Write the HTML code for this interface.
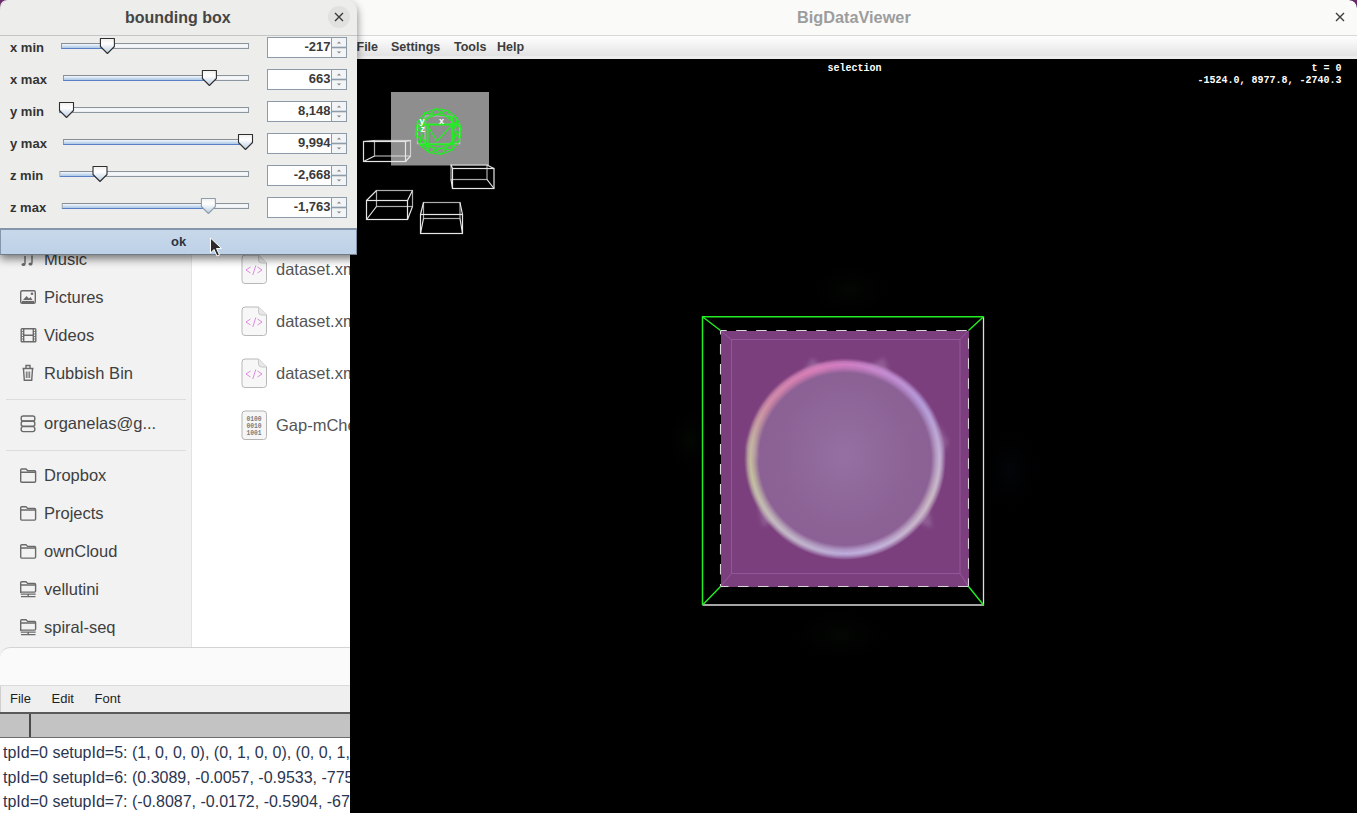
<!DOCTYPE html>
<html><head><meta charset="utf-8">
<style>
*{margin:0;padding:0;box-sizing:border-box}
html,body{width:1357px;height:813px;overflow:hidden;background:#000;font-family:"Liberation Sans",sans-serif}
.a{position:absolute}
.t{position:absolute;line-height:1;white-space:pre}
#fm{left:0;top:0;width:350px;height:665px;background:#fff;overflow:hidden}
#side{left:0;top:0;width:192px;height:665px;background:#f2f2f2;border-right:1px solid #e3e3e3}
.si{left:44px;font-size:16.5px;color:#3f3f3f}
.sep{position:absolute;left:6px;width:180px;height:1px;background:#dcdcdc}
.fi{left:276px;font-size:16.5px;color:#555}
#log{left:0;top:647px;width:350px;height:166px;background:#fafafa;border-top-left-radius:10px;border-top:1px solid #d4d4d4;overflow:hidden}
#bdv{left:350px;top:0;width:1007px;height:813px;background:#000;overflow:hidden}
.mm{top:41px;font-size:12.5px;font-weight:bold;color:#3c3c3c}
.ov{font-family:"Liberation Mono",monospace;font-weight:bold;font-size:10px;color:#fff}
#dlg{left:0;top:0;width:357px;height:255px;background:#ededeb;border-top-left-radius:10px;border-top-right-radius:10px;box-shadow:0 4px 9px rgba(0,0,0,.5)}
.lbl{left:10px;font-size:13px;font-weight:bold;color:#333}
.fv{font-size:13px;font-weight:bold;color:#3a3a3a}
</style></head><body>
<div id="fm" class="a">
<div id="side" class="a"></div>
<div class="t si" style="top:250.8px">Music</div>
<div class="t si" style="top:288.8px">Pictures</div>
<div class="t si" style="top:326.8px">Videos</div>
<div class="t si" style="top:364.8px">Rubbish Bin</div>
<div class="t si" style="top:415.3px">organelas@g...</div>
<div class="t si" style="top:467.3px">Dropbox</div>
<div class="t si" style="top:505.3px">Projects</div>
<div class="t si" style="top:543.3px">ownCloud</div>
<div class="t si" style="top:581.3px">vellutini</div>
<div class="t si" style="top:619.3px">spiral-seq</div>
<div class="sep" style="top:399px"></div><div class="sep" style="top:450px"></div>
<svg class="a" style="left:0;top:0" width="192" height="650" fill="none" stroke="#6a6a6a" stroke-width="1.4">
<path d="M25 256 v8 M32 255.5 v8" /><ellipse cx="23.5" cy="264.5" rx="2" ry="1.6" fill="#6a6a6a" stroke="none"/><ellipse cx="30.5" cy="264" rx="2" ry="1.6" fill="#6a6a6a" stroke="none"/>
<rect x="20.7" y="290.7" width="14.6" height="12.6" rx="1.5"/><path d="M22 302 h12" stroke-width="2.2"/><path d="M23 300 l3.5-4 2.5 2.5 1.5-1.5 2 3z" fill="#6a6a6a" stroke="none"/><circle cx="32" cy="293.7" r="1.3" fill="#6a6a6a" stroke="none"/>
<rect x="21.2" y="328.7" width="14.6" height="13" rx="0.8"/><path d="M23.7 329 v12.5 M33.3 329 v12.5 M24 335.2 h9.3"/><path d="M21.5 331.5h2 M21.5 334h2 M21.5 336.5h2 M21.5 339h2 M33.5 331.5h2 M33.5 334h2 M33.5 336.5h2 M33.5 339h2" stroke-width="0.9"/>
<path d="M22.5 368.5 h11 M26 368 v-2.5 h4 v2.5 M23.5 369 l0.8 11.2 h7.4 l0.8 -11.2" /><path d="M26.3 371.5 v6.5 M28 371.5 v6.5 M29.7 371.5 v6.5" stroke-width="1"/>
<rect x="21.2" y="416" width="13.6" height="5" rx="2"/><rect x="21.2" y="421.3" width="13.6" height="5" rx="2"/><rect x="21.2" y="426.6" width="13.6" height="5" rx="2"/>
<path d="M20.7 480.3 v-10.3 a1 1 0 0 1 1-1 h4.3 l1.6 1.6 h7 a1 1 0 0 1 1 1 v9.7 a1 1 0 0 1 -1 1 h-12.9 a1 1 0 0 1 -1-1z M20.7 472.2 h15"/>
<path d="M20.7 518.1 v-10.3 a1 1 0 0 1 1-1 h4.3 l1.6 1.6 h7 a1 1 0 0 1 1 1 v9.7 a1 1 0 0 1 -1 1 h-12.9 a1 1 0 0 1 -1-1z M20.7 510 h15"/>
<path d="M20.7 556.1 v-10.3 a1 1 0 0 1 1-1 h4.3 l1.6 1.6 h7 a1 1 0 0 1 1 1 v9.7 a1 1 0 0 1 -1 1 h-12.9 a1 1 0 0 1 -1-1z M20.7 548 h15"/>
<path d="M20.7 593.1 v-10.3 a1 1 0 0 1 1-1 h4.3 l1.6 1.6 h7 a1 1 0 0 1 1 1 v6.7 a1 1 0 0 1 -1 1 h-12.9 a1 1 0 0 1 -1-1z M20.7 585 h15"/><path d="M20.7 594.1 h15 M28.2 594.1 v2 M21 596.6 h14.5"/>
<path d="M20.7 631.1 v-10.3 a1 1 0 0 1 1-1 h4.3 l1.6 1.6 h7 a1 1 0 0 1 1 1 v6.7 a1 1 0 0 1 -1 1 h-12.9 a1 1 0 0 1 -1-1z M20.7 623 h15"/><path d="M20.7 632.1 h15 M28.2 632.1 v2 M21 634.6 h14.5"/>
</svg>
<div class="t fi" style="top:261.3px">dataset.xml</div>
<svg class="a" style="left:240.7px;top:253.5px" width="28" height="31"><path d="M4 1 h13.5 l8 8 v17.5 a3 3 0 0 1 -3 3 h-18.5 a3 3 0 0 1 -3-3 v-22.5 a3 3 0 0 1 3-3z" fill="#f7f7f7" stroke="#b8b8b8" stroke-width="1"/><path d="M17.5 1 v5 a3 3 0 0 0 3 3 h5" fill="#e8e8e8" stroke="#c8c8c8" stroke-width="1"/><path d="M9.5 13 l-4.5 3 4.5 3 M16.5 13 l4.5 3 -4.5 3 M14.8 11.5 l-3 9.5" fill="none" stroke="#e088e0" stroke-width="1"/></svg>
<div class="t fi" style="top:313.3px">dataset.xml</div>
<svg class="a" style="left:240.7px;top:305.5px" width="28" height="31"><path d="M4 1 h13.5 l8 8 v17.5 a3 3 0 0 1 -3 3 h-18.5 a3 3 0 0 1 -3-3 v-22.5 a3 3 0 0 1 3-3z" fill="#f7f7f7" stroke="#b8b8b8" stroke-width="1"/><path d="M17.5 1 v5 a3 3 0 0 0 3 3 h5" fill="#e8e8e8" stroke="#c8c8c8" stroke-width="1"/><path d="M9.5 13 l-4.5 3 4.5 3 M16.5 13 l4.5 3 -4.5 3 M14.8 11.5 l-3 9.5" fill="none" stroke="#e088e0" stroke-width="1"/></svg>
<div class="t fi" style="top:365.3px">dataset.xml</div>
<svg class="a" style="left:240.7px;top:357.5px" width="28" height="31"><path d="M4 1 h13.5 l8 8 v17.5 a3 3 0 0 1 -3 3 h-18.5 a3 3 0 0 1 -3-3 v-22.5 a3 3 0 0 1 3-3z" fill="#f7f7f7" stroke="#b8b8b8" stroke-width="1"/><path d="M17.5 1 v5 a3 3 0 0 0 3 3 h5" fill="#e8e8e8" stroke="#c8c8c8" stroke-width="1"/><path d="M9.5 13 l-4.5 3 4.5 3 M16.5 13 l4.5 3 -4.5 3 M14.8 11.5 l-3 9.5" fill="none" stroke="#e088e0" stroke-width="1"/></svg>
<div class="t fi" style="top:417.3px">Gap-mCherry</div>
<svg class="a" style="left:240.7px;top:409.5px" width="28" height="31"><path d="M4 1 h18.5 a3 3 0 0 1 3 3 v22.5 a3 3 0 0 1 -3 3 h-18.5 a3 3 0 0 1 -3-3 v-22.5 a3 3 0 0 1 3-3z" fill="#f6f6f6" stroke="#b4b4b4" stroke-width="1"/><text x="13" y="11" font-family="Liberation Mono" font-weight="bold" font-size="6.3" fill="#7a7a7a" text-anchor="middle">0100</text><text x="13" y="18" font-family="Liberation Mono" font-weight="bold" font-size="6.3" fill="#7a7a7a" text-anchor="middle">0010</text><text x="13" y="25" font-family="Liberation Mono" font-weight="bold" font-size="6.3" fill="#7a7a7a" text-anchor="middle">1001</text></svg>
</div>
<div id="log" class="a">
<div class="a" style="left:0;top:37px;width:350px;height:1px;background:#dadada"></div>
<div class="a" style="left:0;top:38px;width:350px;height:26px;background:#efefef;border-left:1px solid #cfcfcf"></div>
<div class="t" style="left:10px;top:44px;font-size:13px;color:#1e1e1e">File</div>
<div class="t" style="left:51.5px;top:44px;font-size:13px;color:#1e1e1e">Edit</div>
<div class="t" style="left:94.5px;top:44px;font-size:13px;color:#1e1e1e">Font</div>
<div class="a" style="left:0;top:64px;width:350px;height:26px;background:#c3c3c3;border-top:2px solid #5a5a5a;border-bottom:1px solid #6c6c6c"></div>
<div class="a" style="left:29px;top:66px;width:1.5px;height:23px;background:#4a4a4a"></div>
<div class="a" style="left:0;top:90px;width:350px;height:76px;background:#fff"></div>
<div class="t" style="left:3px;top:97px;font-size:16px;color:#2b3550">tpId=0 setupId=5: (1, 0, 0, 0), (0, 1, 0, 0), (0, 0, 1, 0)</div>
<div class="t" style="left:3px;top:121.5px;font-size:16px;color:#2b3550">tpId=0 setupId=6: (0.3089, -0.0057, -0.9533, -775.1)</div>
<div class="t" style="left:3px;top:146px;font-size:16px;color:#2b3550">tpId=0 setupId=7: (-0.8087, -0.0172, -0.5904, -67.2)</div>
</div>
<div id="bdv" class="a">
<div class="a" style="left:0;top:0;width:1007px;height:36px;background:#fafaf9;border-bottom:1px solid #d8d8d8;border-top-right-radius:8px"></div>
<div class="t" style="left:447px;top:9px;font-size:16.3px;font-weight:bold;color:#9d9d9d">BigDataViewer</div>
<svg class="a" style="left:985px;top:12px" width="10" height="10"><path d="M1 1 L9 9 M9 1 L1 9" stroke="#3d3d3d" stroke-width="1.4"/></svg>
<div class="a" style="left:0;top:36px;width:1007px;height:23px;background:linear-gradient(#fefdfd,#f6f6f6 30%,#e3e3e3 85%,#ebebeb 88%,#ededed)"></div>
<div class="t mm" style="left:6.5px;top:41.4px">File</div>
<div class="t mm" style="left:41px;top:41.4px">Settings</div>
<div class="t mm" style="left:104px;top:41.4px">Tools</div>
<div class="t mm" style="left:147px;top:41.4px">Help</div>
<div class="t ov" style="left:477.5px;top:63.7px">selection</div>
<div class="t ov" style="right:15.5px;top:63.7px">t = 0</div>
<div class="t ov" style="right:15.5px;top:75.7px">-1524.0, 8977.8, -2740.3</div>
</div>
<svg class="a" style="left:1349px;top:0" width="8" height="8"><path d="M0 0 H8 V8 A8 8 0 0 0 0 0z" fill="#6b2a6b"/></svg>
<svg class="a" style="left:0;top:0;pointer-events:none" width="1357" height="813">
<defs><radialGradient id="glow" cx="50%" cy="50%" r="50%"><stop offset="0" stop-color="#050c05" stop-opacity="0.6"/><stop offset="1" stop-color="#000" stop-opacity="0"/></radialGradient><radialGradient id="glow2" cx="50%" cy="50%" r="50%"><stop offset="0" stop-color="#04080e" stop-opacity="0.6"/><stop offset="1" stop-color="#000" stop-opacity="0"/></radialGradient></defs>
<rect x="391" y="92" width="98" height="73.5" fill="#8e8e8e"/>
<g fill="none" stroke="#e6e6e6" stroke-width="1.2"><rect x="363.5" y="141.5" width="42" height="20"/><rect x="374.5" y="140.5" width="36" height="15.5" stroke-opacity="0.75"/><path d="M363.5 141.5 L374.5 140.5 M405.5 141.5 L410.5 140.5 M363.5 161.5 L374.5 156 M405.5 161.5 L410.5 156"/></g>
<g fill="none" stroke="#e6e6e6" stroke-width="1.2"><rect x="452.5" y="168.5" width="41.5" height="20"/><rect x="451" y="165" width="36" height="14.5" stroke-opacity="0.75"/><path d="M452.5 168.5 L451 165 M494 168.5 L487 165 M452.5 188.5 L451 179.5 M494 188.5 L487 179.5"/></g>
<g fill="none" stroke="#e6e6e6" stroke-width="1.2"><rect x="366.5" y="200.5" width="41" height="19"/><rect x="376.5" y="190.5" width="36" height="16" stroke-opacity="0.75"/><path d="M366.5 200.5 L376.5 190.5 M407.5 200.5 L412.5 190.5 M366.5 219.5 L376.5 206.5 M407.5 219.5 L412.5 206.5"/></g>
<g fill="none" stroke="#e6e6e6" stroke-width="1.2"><rect x="420.5" y="214.5" width="42" height="19"/><rect x="423.5" y="202.5" width="36.5" height="16" stroke-opacity="0.75"/><path d="M420.5 214.5 L423.5 202.5 M462.5 214.5 L460 202.5 M420.5 233.5 L423.5 218.5 M462.5 233.5 L460 218.5"/></g>
<g fill="none" stroke="#dccce0" stroke-width="0.9" opacity="0.75"><rect x="417.3" y="124.3" width="42.5" height="19.5"/><rect x="425" y="116" width="27" height="8.5"/><path d="M425 124.3 V143.5"/></g>
<g fill="none" stroke="#22ee22" stroke-width="1.1"><rect x="422" y="115" width="33" height="33" transform="rotate(8 438.5 131.5)"/><rect x="422" y="115" width="33" height="33" transform="rotate(38 438.5 131.5)"/><rect x="422" y="115" width="33" height="33" transform="rotate(68 438.5 131.5)"/><circle cx="438.5" cy="131.5" r="22.5"/><path d="M420.5 124.5 H460 M422 144.2 H454.5 M452.5 117.5 V145 M427.6 124 V150" stroke-width="2"/><path d="M427.3 125.6 L437.2 141 L452 125" stroke-width="1.2"/></g>
<g font-family="Liberation Sans" font-weight="bold" font-size="9" fill="#fff"><text x="419.5" y="123.5">y</text><text x="439" y="123.5">x</text><text x="420.5" y="132">z</text></g>
<ellipse cx="850" cy="290" rx="45" ry="30" fill="url(#glow)"/>
<ellipse cx="840" cy="635" rx="55" ry="30" fill="url(#glow)"/>
<ellipse cx="690" cy="440" rx="25" ry="35" fill="url(#glow)"/>
<ellipse cx="1010" cy="470" rx="35" ry="50" fill="url(#glow2)"/>
</svg>
<div class="a" style="left:720.5px;top:330.5px;width:248px;height:256px;background:#7b3f7e"></div>
<div class="a" style="left:747px;top:361px;width:195px;height:195px;border-radius:50%;background:radial-gradient(circle,#8e6697 0,#8c6295 55%,#8a5c92 85%,#865690 100%)"></div>
<div class="a" style="left:780px;top:380px;width:130px;height:150px;border-radius:50%;background:radial-gradient(ellipse,rgba(160,130,180,.35),rgba(160,130,180,0) 70%)"></div>
<svg class="a" style="left:0;top:0" width="1357" height="813"><defs><filter id="bl" x="-50%" y="-50%" width="200%" height="200%"><feGaussianBlur stdDeviation="2"/></filter></defs><g fill="#b898c0" fill-opacity="0.35" filter="url(#bl)"><path d="M802 374 L812 358 L826 370z"/><path d="M866 368 L884 358 L890 376z"/><path d="M754 428 L746 448 L758 460z"/><path d="M938 424 L948 442 L940 460z"/><path d="M758 506 L763 526 L776 520z"/><path d="M928 506 L932 528 L918 522z"/></g></svg>
<div class="a" style="left:742.5px;top:356.5px;width:204px;height:204px;border-radius:50%;filter:blur(1px);opacity:0.95;background:conic-gradient(from 0deg,#d880c8,#c890d8 8%,#b8a0e0 15%,#c8b8d8 25%,#d0c0c8 32%,#c8b8e0 45%,#c0b0e0 50%,#c8c0c8 62%,#c8c8a0 72%,#c8b8a0 78%,#d890a8 85%,#e080b8 93%,#d880c8);-webkit-mask:radial-gradient(circle,transparent 0,transparent 86px,rgba(0,0,0,.7) 91px,#000 94.5px,rgba(0,0,0,.55) 98px,transparent 101px)"></div>
<svg class="a" style="left:0;top:0" width="1357" height="813">
<g fill="none" stroke-width="1"><rect x="731.5" y="339.5" width="228.5" height="234" stroke="#a060a8" stroke-opacity="0.7"/><path d="M720.5 330.5 L731.5 339.5 M968.5 330.5 L960 339.5 M720.5 586.5 L731.5 573.5 M968.5 586.5 L960 573.5" stroke="#a060a8" stroke-opacity="0.7"/></g>
<g fill="none" stroke="#dcd6dc" stroke-width="1.1" stroke-dasharray="10.5 9.5"><path d="M720.5 330.5 H968.5" stroke-dashoffset="4.3"/><path d="M720.5 330.5 V586.5" stroke-dashoffset="6.6"/><path d="M720.5 586.5 H968.5" stroke-dashoffset="2.5"/><path d="M968.5 330.5 V586.5" stroke-dashoffset="12.3"/></g>
<path d="M702.5 605 V316.7 H983.5" fill="none" stroke="#22ee22" stroke-width="1.5"/>
<path d="M983.5 316.7 V605 H702.5" fill="none" stroke="#dcdcdc" stroke-width="1.3"/>
<path d="M702.5 316.7 L720.5 330.5 M983.5 316.7 L968.5 330.5 M702.5 605 L720.5 586.5 M983.5 605 L968.5 586.5" fill="none" stroke="#22ee22" stroke-width="1.4"/>
</svg>
<div id="dlg" class="a">
<div class="a" style="left:0;top:35px;width:357px;height:1px;background:#c6c6c6"></div>
<div class="t" style="left:125px;top:10.4px;font-size:16px;font-weight:bold;color:#454545">bounding box</div>
<div class="a" style="left:328px;top:6px;width:22px;height:22px;border-radius:50%;background:#e1e1df"></div>
<svg class="a" style="left:334px;top:12px" width="10" height="10"><path d="M1 1 L9 9 M9 1 L1 9" stroke="#3a3a3a" stroke-width="1.4"/></svg>
<svg class="a" style="left:0;top:0" width="357" height="255">
<defs><linearGradient id="fill" x1="0" y1="0" x2="0" y2="1"><stop offset="0" stop-color="#f4f8fc"/><stop offset="0.45" stop-color="#c9dcef"/><stop offset="1" stop-color="#9cbde4"/></linearGradient><linearGradient id="unf" x1="0" y1="0" x2="0" y2="1"><stop offset="0" stop-color="#e8eaee"/><stop offset="0.5" stop-color="#fafbfc"/><stop offset="1" stop-color="#e0e6ec"/></linearGradient><linearGradient id="th" x1="0" y1="0" x2="0" y2="1"><stop offset="0" stop-color="#f0f0f0"/><stop offset="0.35" stop-color="#ffffff"/><stop offset="1" stop-color="#b8cce0"/></linearGradient></defs>
<rect x="61.5" y="43.5" width="187" height="5" fill="url(#unf)" stroke="#8c969e" stroke-width="1"/><rect x="62" y="44" width="45.4" height="5" fill="url(#fill)"/><path d="M61.5 48.5 H107.4" stroke="#5a80c8" stroke-width="1.2"/><path d="M61.5 43.5 H107.4" stroke="#8a8e92" stroke-width="1"/><path d="M100.4 38.5 H114.4 V46.5 L107.4 53.5 L100.4 46.5 Z" fill="url(#th)" stroke="#2e2e2e" stroke-width="1.1" stroke-linejoin="round"/>
<rect x="267.5" y="37.5" width="64" height="20" fill="#fff" stroke="#8d9aa8" stroke-width="1"/><rect x="331.5" y="37.5" width="15" height="20" fill="#f3f4f6" stroke="#8d9aa8" stroke-width="1"/><path d="M332 47.5 H346" stroke="#8d9aa8" stroke-width="1.6"/><path d="M336.8 43.6 L339 41.4 L341.2 43.6 Z" fill="#8a8a8a"/><path d="M336.8 51.4 L339 53.6 L341.2 51.4 Z" fill="#8a8a8a"/>
<rect x="63.5" y="75.5" width="185" height="5" fill="url(#unf)" stroke="#8c969e" stroke-width="1"/><rect x="64" y="76" width="145.4" height="5" fill="url(#fill)"/><path d="M63.5 80.5 H209.4" stroke="#5a80c8" stroke-width="1.2"/><path d="M63.5 75.5 H209.4" stroke="#8a8e92" stroke-width="1"/><path d="M202.4 70.5 H216.4 V78.5 L209.4 85.5 L202.4 78.5 Z" fill="url(#th)" stroke="#2e2e2e" stroke-width="1.1" stroke-linejoin="round"/>
<rect x="267.5" y="69.5" width="64" height="20" fill="#fff" stroke="#8d9aa8" stroke-width="1"/><rect x="331.5" y="69.5" width="15" height="20" fill="#f3f4f6" stroke="#8d9aa8" stroke-width="1"/><path d="M332 79.5 H346" stroke="#8d9aa8" stroke-width="1.6"/><path d="M336.8 75.6 L339 73.4 L341.2 75.6 Z" fill="#8a8a8a"/><path d="M336.8 83.4 L339 85.6 L341.2 83.4 Z" fill="#8a8a8a"/>
<rect x="59.5" y="107.5" width="189" height="5" fill="url(#unf)" stroke="#8c969e" stroke-width="1"/><rect x="60" y="108" width="6.5" height="5" fill="url(#fill)"/><path d="M59.5 112.5 H66.5" stroke="#5a80c8" stroke-width="1.2"/><path d="M59.5 107.5 H66.5" stroke="#8a8e92" stroke-width="1"/><path d="M59.5 102.5 H73.5 V110.5 L66.5 117.5 L59.5 110.5 Z" fill="url(#th)" stroke="#2e2e2e" stroke-width="1.1" stroke-linejoin="round"/>
<rect x="267.5" y="101.5" width="64" height="20" fill="#fff" stroke="#8d9aa8" stroke-width="1"/><rect x="331.5" y="101.5" width="15" height="20" fill="#f3f4f6" stroke="#8d9aa8" stroke-width="1"/><path d="M332 111.5 H346" stroke="#8d9aa8" stroke-width="1.6"/><path d="M336.8 107.6 L339 105.4 L341.2 107.6 Z" fill="#8a8a8a"/><path d="M336.8 115.4 L339 117.6 L341.2 115.4 Z" fill="#8a8a8a"/>
<rect x="63.5" y="139.5" width="185" height="5" fill="url(#unf)" stroke="#8c969e" stroke-width="1"/><rect x="64" y="140" width="181.5" height="5" fill="url(#fill)"/><path d="M63.5 144.5 H245.5" stroke="#5a80c8" stroke-width="1.2"/><path d="M63.5 139.5 H245.5" stroke="#8a8e92" stroke-width="1"/><path d="M238.5 134.5 H252.5 V142.5 L245.5 149.5 L238.5 142.5 Z" fill="url(#th)" stroke="#2e2e2e" stroke-width="1.1" stroke-linejoin="round"/>
<rect x="267.5" y="133.5" width="64" height="20" fill="#fff" stroke="#8d9aa8" stroke-width="1"/><rect x="331.5" y="133.5" width="15" height="20" fill="#f3f4f6" stroke="#8d9aa8" stroke-width="1"/><path d="M332 143.5 H346" stroke="#8d9aa8" stroke-width="1.6"/><path d="M336.8 139.6 L339 137.4 L341.2 139.6 Z" fill="#8a8a8a"/><path d="M336.8 147.4 L339 149.6 L341.2 147.4 Z" fill="#8a8a8a"/>
<rect x="60" y="171.5" width="188.5" height="5" fill="url(#unf)" stroke="#8c969e" stroke-width="1"/><rect x="60.5" y="172" width="39.5" height="5" fill="url(#fill)"/><path d="M60 176.5 H100" stroke="#5a80c8" stroke-width="1.2"/><path d="M60 171.5 H100" stroke="#8a8e92" stroke-width="1"/><path d="M93 166.5 H107 V174.5 L100 181.5 L93 174.5 Z" fill="url(#th)" stroke="#2e2e2e" stroke-width="1.1" stroke-linejoin="round"/>
<rect x="267.5" y="165.5" width="64" height="20" fill="#fff" stroke="#8d9aa8" stroke-width="1"/><rect x="331.5" y="165.5" width="15" height="20" fill="#f3f4f6" stroke="#8d9aa8" stroke-width="1"/><path d="M332 175.5 H346" stroke="#8d9aa8" stroke-width="1.6"/><path d="M336.8 171.6 L339 169.4 L341.2 171.6 Z" fill="#8a8a8a"/><path d="M336.8 179.4 L339 181.6 L341.2 179.4 Z" fill="#8a8a8a"/>
<rect x="62.3" y="203.5" width="186.2" height="5" fill="url(#unf)" stroke="#8c969e" stroke-width="1"/><rect x="62.8" y="204" width="145.6" height="5" fill="url(#fill)"/><path d="M62.3 208.5 H208.4" stroke="#5a80c8" stroke-width="1.2"/><path d="M62.3 203.5 H208.4" stroke="#8a8e92" stroke-width="1"/><path d="M201.4 198.5 H215.4 V206.5 L208.4 213.5 L201.4 206.5 Z" fill="url(#th)" stroke="#8e9eae" stroke-width="1.1" stroke-linejoin="round"/>
<rect x="267.5" y="197.5" width="64" height="20" fill="#fff" stroke="#8d9aa8" stroke-width="1"/><rect x="331.5" y="197.5" width="15" height="20" fill="#f3f4f6" stroke="#8d9aa8" stroke-width="1"/><path d="M332 207.5 H346" stroke="#8d9aa8" stroke-width="1.6"/><path d="M336.8 203.6 L339 201.4 L341.2 203.6 Z" fill="#8a8a8a"/><path d="M336.8 211.4 L339 213.6 L341.2 211.4 Z" fill="#8a8a8a"/>
</svg>
<div class="lbl t" style="top:41.2px">x min</div>
<div class="t fv" style="right:26.5px;top:40px">-217</div>
<div class="lbl t" style="top:73.2px">x max</div>
<div class="t fv" style="right:26.5px;top:72px">663</div>
<div class="lbl t" style="top:105.2px">y min</div>
<div class="t fv" style="right:26.5px;top:104px">8,148</div>
<div class="lbl t" style="top:137.2px">y max</div>
<div class="t fv" style="right:26.5px;top:136px">9,994</div>
<div class="lbl t" style="top:169.2px">z min</div>
<div class="t fv" style="right:26.5px;top:168px">-2,668</div>
<div class="lbl t" style="top:201.2px">z max</div>
<div class="t fv" style="right:26.5px;top:200px">-1,763</div>
<div class="a" style="left:0;top:228px;width:357px;height:27px;background:linear-gradient(#c8d8ea,#bdd1e7);border-top:2px solid #8595aa;border-bottom:1px solid #707a86;border-left:1px solid #8595aa;border-right:1px solid #8595aa"></div>
<div class="t" style="left:171px;top:234.8px;font-size:13px;font-weight:bold;color:#2d3340">ok</div>
</div>
<svg class="a" style="left:0;top:0" width="7" height="7"><path d="M0 0 H7 A7 7 0 0 0 0 7z" fill="#6b2a6b"/></svg>
<svg class="a" style="left:209px;top:237px" width="16" height="20"><path d="M1.5 1 V16 L5 12.5 L8 19 L10.5 18 L7.5 11.5 H12.5 Z" fill="#2a2a2a" stroke="#fff" stroke-width="1"/></svg>
</body></html>
